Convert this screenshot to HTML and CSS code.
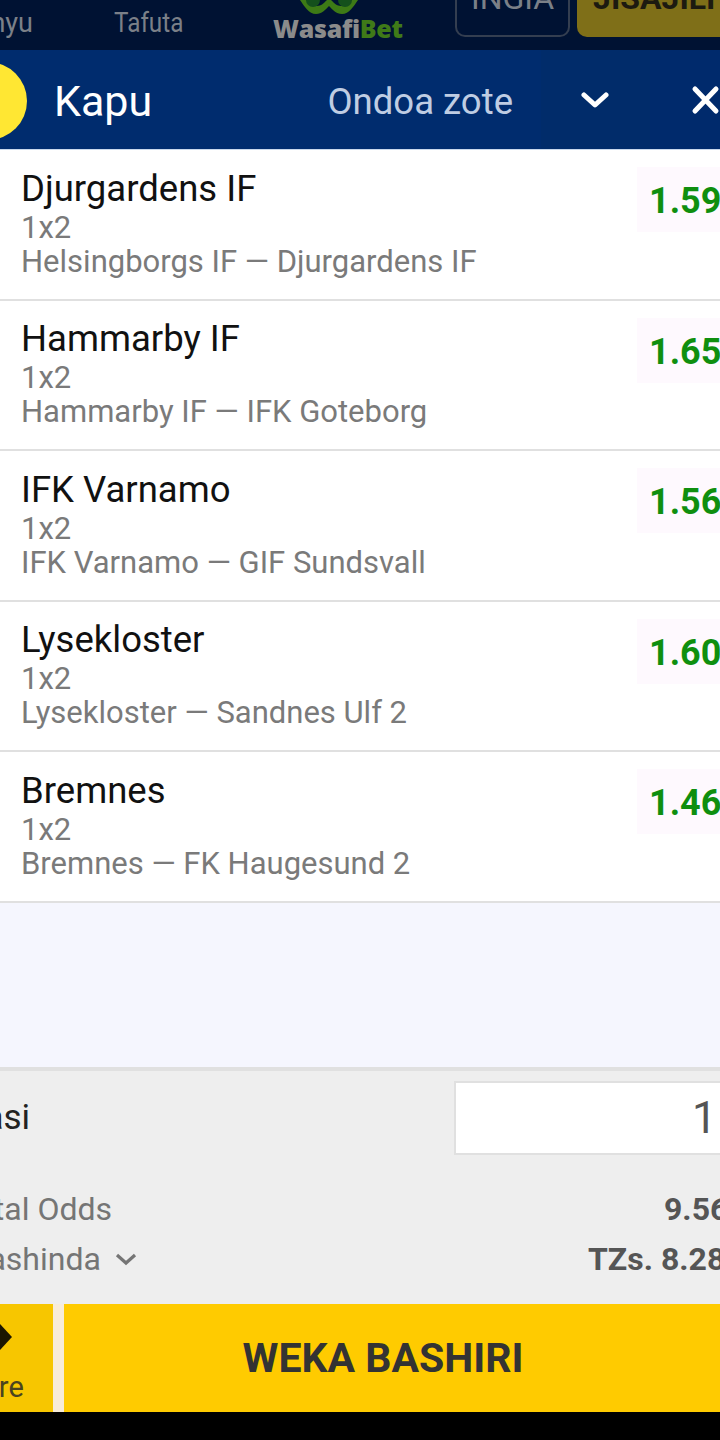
FILE: index.html

```html
<!DOCTYPE html>
<html>
<head>
    <title>Kapu</title>
    <link rel="stylesheet" href="styles.css">
</head>
<body>
    <div class="topbar">
        <span class="nav-link nav-first">Menyu</span>
        <span class="nav-link nav-search">Tafuta</span>
        <div class="logo">
            <svg class="logo-mark" width="60" height="15" viewBox="0 0 60 15">
                <path d="M1 0 C5 6 10 14 17 14 C23 14 26 10 30 6 C34 10 37 14 43 14 C50 14 55 6 59 0 L53 0 C50 3 46 6 42 6 C38 6 35 3 32 0 L28 0 C25 3 22 6 18 6 C14 6 10 3 7 0 Z" fill="#3d7a16"/>
                <circle cx="14" cy="0" r="7" fill="#14501c"/>
                <circle cx="46" cy="0" r="7" fill="#14501c"/>
            </svg>
            <div class="logo-text">Wasafi<span class="logo-green">Bet</span></div>
        </div>
        <div class="btn-login"><span>INGIA</span></div>
        <div class="btn-join"><span>JISAJILI</span></div>
    </div>

    <div class="cart-head">
        <div class="cart-dot"></div>
        <div class="cart-title">Kapu</div>
        <div class="cart-clear">Ondoa zote</div>
        <svg class="icon-down" width="28" height="20" viewBox="0 0 28 20">
            <path d="M3 5 L14 15 L25 5" fill="none" stroke="#fff" stroke-width="5" stroke-linecap="round" stroke-linejoin="round"/>
        </svg>
        <svg class="icon-close" width="30" height="30" viewBox="0 0 30 30">
            <path d="M5 4 L26 26 M26 4 L5 26" fill="none" stroke="#fff" stroke-width="5" stroke-linecap="round"/>
        </svg>
    </div>

    <div class="bets">
        <div class="bet">
            <div class="bet-info">
                <div class="bet-pick">Djurgardens IF</div>
                <div class="bet-market">1x2</div>
                <div class="bet-sub">Helsingborgs IF — Djurgardens IF</div>
            </div>
            <div class="bet-odd">1.59</div>
        </div>
        <div class="bet">
            <div class="bet-info">
                <div class="bet-pick">Hammarby IF</div>
                <div class="bet-market">1x2</div>
                <div class="bet-sub">Hammarby IF — IFK Goteborg</div>
            </div>
            <div class="bet-odd">1.65</div>
        </div>
        <div class="bet">
            <div class="bet-info">
                <div class="bet-pick">IFK Varnamo</div>
                <div class="bet-market">1x2</div>
                <div class="bet-sub">IFK Varnamo — GIF Sundsvall</div>
            </div>
            <div class="bet-odd">1.56</div>
        </div>
        <div class="bet">
            <div class="bet-info">
                <div class="bet-pick">Lysekloster</div>
                <div class="bet-market">1x2</div>
                <div class="bet-sub">Lysekloster — Sandnes Ulf 2</div>
            </div>
            <div class="bet-odd">1.60</div>
        </div>
        <div class="bet">
            <div class="bet-info">
                <div class="bet-pick">Bremnes</div>
                <div class="bet-market">1x2</div>
                <div class="bet-sub">Bremnes — FK Haugesund 2</div>
            </div>
            <div class="bet-odd">1.46</div>
        </div>
    </div>

    <div class="summary">
        <div class="stake-row">
            <div class="stake-label">Kiasi</div>
            <div class="stake-input">1</div>
        </div>
        <div class="total-row">
            <div class="total-label label-odds">Total Odds</div>
            <div class="total-value value-odds">9.5678</div>
        </div>
        <div class="total-row">
            <div class="total-label label-win">
                <span class="win-text">Unashinda</span>
                <svg class="icon-small" width="22" height="14" viewBox="0 0 22 14">
                    <path d="M2 3 L11 11 L20 3" fill="none" stroke="#757575" stroke-width="3.2"/>
                </svg>
            </div>
            <div class="total-value value-win">TZs. 8.2800</div>
        </div>
    </div>

    <div class="actions">
        <div class="btn-more">
            <svg class="icon-more" width="14" height="30" viewBox="0 0 14 30">
                <path d="M0 2 L12 15 L0 28 Z" fill="#1c1600"/>
            </svg>
            <div class="more-text">More</div>
        </div>
        <div class="btn-place">WEKA BASHIRI</div>
    </div>

    <div class="navbar"></div>
</body>
</html>
```

FILE: styles.css

```css
html, body {
    margin: 0;
    padding: 0;
}

body {
    width: 720px;
    height: 1440px;
    overflow: hidden;
    display: flex;
    flex-direction: column;
    font-family: Roboto, "Liberation Sans", sans-serif;
    background-color: #000;
}

/* dimmed site header behind the cart */
.topbar {
    height: 50px;
    flex: none;
    display: flex;
    background-color: #001233;
    overflow: hidden;
}

.nav-link {
    flex: none;
    color: #7b8088;
    font-size: 27px;
    line-height: 46px;
}

.nav-first {
    width: 33px;
    text-align: right;
    direction: rtl;
    overflow: hidden;
}

.nav-search {
    margin-left: 81px;
    transform: scaleX(0.9);
    transform-origin: left;
}

.logo {
    flex: none;
    width: 132px;
    margin-left: 82px;
}

.logo-mark {
    display: block;
    margin: 0 0 0 26px;
}

.logo-text {
    font-family: "Open Sans", sans-serif;
    font-weight: 800;
    font-size: 25px;
    line-height: 26px;
    letter-spacing: -0.3px;
    color: #8b8b8b;
}

.logo-green {
    color: #3f7a18;
}

.btn-login {
    flex: none;
    box-sizing: border-box;
    width: 115px;
    height: 37px;
    margin-left: 50px;
    border: 2px solid #343e50;
    border-top: none;
    border-radius: 0 0 10px 10px;
    color: #7b8088;
    font-size: 32px;
    line-height: 22px;
    text-align: center;
    overflow: hidden;
}

.btn-login span,
.btn-join span {
    display: block;
    margin-top: -13px;
}

.btn-join {
    flex: none;
    width: 160px;
    height: 37px;
    margin-left: 7px;
    border-radius: 0 0 0 10px;
    background-color: #7f6f18;
    color: #1c1a10;
    font-size: 32px;
    font-weight: 700;
    line-height: 22px;
    padding-left: 16px;
    overflow: hidden;
    white-space: nowrap;
}

/* cart header */
.cart-head {
    height: 99px;
    flex: none;
    display: flex;
    align-items: center;
    background: linear-gradient(to right, #002c6e 541px, #012c6a 541px, #012c6a 650px, #002a6c 650px);
    position: relative;
}

.cart-dot {
    position: absolute;
    left: -51px;
    top: 12px;
    width: 78px;
    height: 78px;
    border-radius: 50%;
    background-color: #ffe733;
}

.cart-title {
    margin-left: 54px;
    width: 274px;
    padding-top: 3px;
    color: #fff;
    font-size: 43px;
}

.cart-clear {
    width: 245px;
    padding-top: 3px;
    color: #bfcde3;
    font-size: 36.5px;
}

.icon-down {
    flex: none;
    margin-left: 9px;
}

.icon-close {
    flex: none;
    margin-left: 81px;
}

/* bet list */
.bets {
    height: 918px;
    flex: none;
    box-sizing: border-box;
    border-top: 1px solid #c9d8ec;
    background-color: #f5f6fe;
}

.bet {
    height: 150.5px;
    box-sizing: border-box;
    display: flex;
    justify-content: space-between;
    align-items: flex-start;
    padding-left: 21px;
    background-color: #fff;
    border-bottom: 2px solid #e0e0e0;
}

.bet-info {
    padding-top: 18.5px;
}

.bet-pick {
    color: #111;
    font-size: 36.5px;
    line-height: 40px;
}

.bet-market,
.bet-sub {
    color: #7a7a7a;
    font-size: 31px;
    line-height: 34px;
}

.bet-market {
    margin-top: 2px;
}

.bet-odd {
    flex: none;
    width: 83px;
    height: 65px;
    margin-top: 17px;
    box-sizing: border-box;
    padding-left: 12px;
    background-color: #fef9fe;
    color: #0f8f0f;
    font-size: 36px;
    font-weight: 700;
    line-height: 68px;
    white-space: nowrap;
    overflow: hidden;
}

/* stake and totals */
.summary {
    height: 237px;
    flex: none;
    box-sizing: border-box;
    border-top: 4px solid #e0e0e0;
    background-color: #eee;
    overflow: hidden;
}

.stake-row {
    display: flex;
    justify-content: space-between;
    height: 113px;
    padding-top: 10px;
    box-sizing: border-box;
}

.stake-label {
    width: 30px;
    direction: rtl;
    overflow: hidden;
    white-space: nowrap;
    color: #222;
    font-size: 35px;
    line-height: 74px;
}

.stake-input {
    flex: none;
    width: 266px;
    height: 74px;
    box-sizing: border-box;
    border: 2px solid #e0e0e0;
    border-right: none;
    background-color: #fff;
    color: #555;
    font-size: 44px;
    line-height: 70px;
    padding-left: 236px;
    overflow: hidden;
}

.total-row {
    display: flex;
    justify-content: space-between;
    height: 50px;
    line-height: 50px;
    white-space: nowrap;
}

.total-label {
    color: #757575;
    font-size: 32px;
    display: flex;
    align-items: center;
}

.label-odds {
    margin-left: -42px;
}

.label-win {
    margin-left: -50px;
}

.icon-small {
    margin-left: 14px;
}

.total-value {
    flex: none;
    overflow: hidden;
    color: #555;
    font-size: 32px;
    font-weight: 700;
}

.value-odds {
    width: 56px;
}

.value-win {
    width: 132px;
}

/* bottom buttons */
.actions {
    height: 108px;
    flex: none;
    display: flex;
    background-color: #f8ecd9;
}

.btn-more {
    width: 53px;
    flex: none;
    background-color: #f7c600;
    overflow: hidden;
}

.icon-more {
    display: block;
    margin: 18px 0 0 0;
}

.more-text {
    margin-left: -43px;
    margin-top: 20px;
    color: #4a4320;
    font-size: 29px;
    line-height: 30px;
}

.btn-place {
    flex: none;
    width: 656px;
    box-sizing: border-box;
    margin-left: 11px;
    padding-right: 18px;
    background-color: #ffcb00;
    color: #333;
    font-size: 41px;
    font-weight: 700;
    line-height: 108px;
    text-align: center;
}

.navbar {
    flex: 1;
    background-color: #000;
}
```
